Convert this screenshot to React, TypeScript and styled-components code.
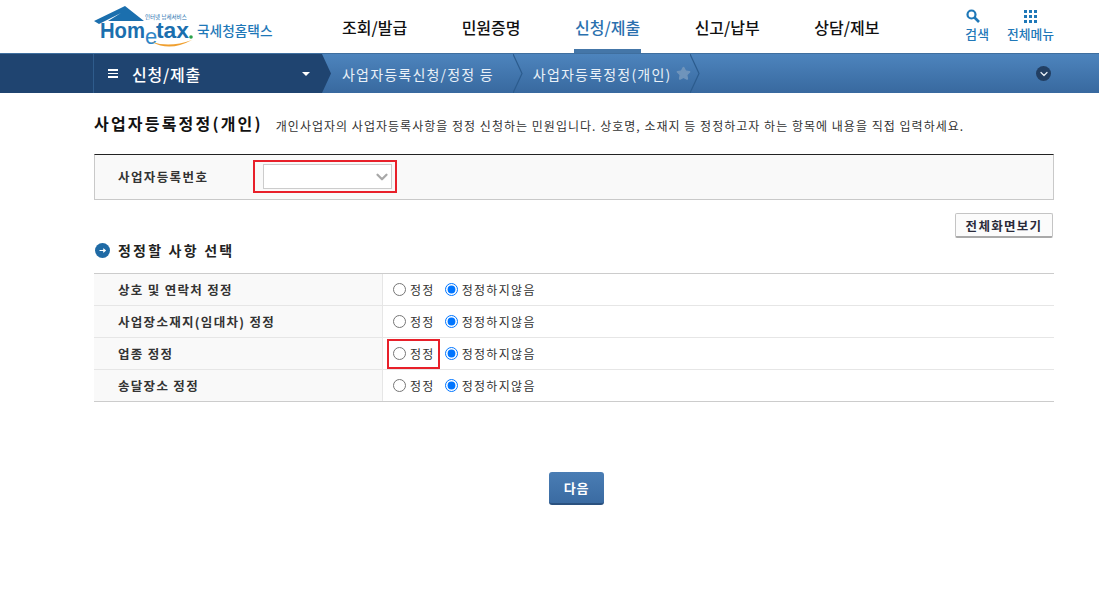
import React from 'react';
import styled, { createGlobalStyle } from 'styled-components';
import { ChevronDown, Star } from 'lucide-react';

const GlobalStyle = createGlobalStyle`
  html, body {
    margin: 0;
    padding: 0;
    background: #fff;
  }
  body {
    font-family: "Noto Sans CJK KR", "Liberation Sans", sans-serif;
    color: #222;
  }
  * {
    box-sizing: border-box;
  }
`;

const Page = styled.div`
  width: 1099px;
  height: 606px;
  overflow: hidden;
`;

const Header = styled.header`
  height: 53px;
  padding: 0 45px 0 94px;
  display: flex;
  align-items: stretch;
`;

const LogoBox = styled.div`
  width: 248px;
  flex: none;
`;

const LogoSvg = styled.svg`
  display: block;
  margin-top: 4px;
`;

const MainNav = styled.nav`
  display: flex;
  gap: 54.5px;
  flex: none;
`;

const MainNavItem = styled.a<{ $active?: boolean }>`
  display: block;
  padding-top: 16px;
  font-size: 16px;
  line-height: 22px;
  font-weight: 500;
  white-space: nowrap;
  color: ${(p) => (p.$active ? '#2a70ae' : '#111')};
`;

const ActiveLabel = styled.span`
  display: block;
  height: 37px;
  margin: 0 -1px;
  padding: 0 1px;
  border-bottom: 4px solid #4476a8;
`;

const Tools = styled.div`
  display: flex;
  margin-left: auto;
  gap: 18px;
`;

const ToolItem = styled.a`
  display: flex;
  flex-direction: column;
  align-items: center;
  padding-top: 9px;
  gap: 3px;
  font-size: 12.8px;
  line-height: 16px;
  color: #1f78b8;
  font-weight: 500;
`;

const ToolIcon = styled.span<{ $start?: boolean }>`
  height: 14px;
  display: flex;
  align-items: center;
  align-self: ${(p) => (p.$start ? 'flex-start' : 'center')};
  margin-left: ${(p) => (p.$start ? '1px' : '0')};
`;

const SubBar = styled.div`
  height: 40px;
  display: flex;
  align-items: center;
  background: linear-gradient(#4d84bd, #38699f);
  border-top: 1px solid #3f6f9f;
  color: #fff;
`;

const SectionPad = styled.div`
  width: 94px;
  height: 100%;
  flex: none;
  background: #1f4470;
  border-right: 1px solid #2f5c8c;
`;

const Section = styled.div`
  width: 228px;
  height: 100%;
  flex: none;
  display: flex;
  align-items: center;
  padding-left: 14px;
  padding-right: 12px;
  background: #1f4470;
`;

const Hamburger = styled.span`
  width: 10px;
  height: 9px;
  margin-right: 14px;
  border-top: 2px solid #fff;
  border-bottom: 2px solid #fff;
  display: flex;
  align-items: center;
  &::before {
    content: '';
    width: 100%;
    height: 1.5px;
    background: #fff;
  }
`;

const SectionTitle = styled.span`
  font-size: 16px;
  line-height: 20px;
  font-weight: 500;
  letter-spacing: 0.8px;
  flex: 1;
`;

const Caret = styled.span`
  width: 0;
  height: 0;
  border-left: 4px solid transparent;
  border-right: 4px solid transparent;
  border-top: 4px solid #fff;
`;

const CrumbArrow = styled.svg`
  flex: none;
  display: block;
  height: 39px;
`;

const Crumb = styled.span<{ $current?: boolean }>`
  margin: 0 ${(p) => (p.$current ? '5px' : '19px')} 0 9px;
  font-size: 14px;
  line-height: 20px;
  letter-spacing: 1.2px;
  color: #eaf1f8;
  white-space: nowrap;
`;

const CrumbStar = styled(Star)`
  flex: none;
  margin-right: -1px;
`;

const CollapseButton = styled.span`
  width: 15px;
  height: 15px;
  border-radius: 50%;
  background: #223f63;
  margin-left: auto;
  margin-right: 48px;
  display: flex;
  align-items: center;
  justify-content: center;
  color: #e6edf5;
`;

const Main = styled.main`
  width: 960px;
  margin-left: 94px;
  padding-top: 18px;
`;

const TitleRow = styled.div`
  display: flex;
  align-items: center;
  height: 24px;
`;

const Title = styled.h1`
  margin: 0 13px 0 0;
  font-size: 16px;
  line-height: 24px;
  font-weight: 700;
  letter-spacing: 2.2px;
  color: #111;
  white-space: nowrap;
`;

const TitleNote = styled.p`
  margin: 0;
  padding-top: 5px;
  font-size: 12px;
  line-height: 18px;
  letter-spacing: 1.02px;
  color: #333;
  white-space: nowrap;
`;

const LookupBox = styled.div`
  margin-top: 19px;
  height: 46px;
  display: flex;
  align-items: center;
  padding: 0 0 1px 23px;
  background: #f9f9f9;
  border: 1px solid #c9c9c9;
  border-top-color: #222;
`;

const LookupLabel = styled.span`
  width: 135px;
  font-size: 12.5px;
  font-weight: 700;
  letter-spacing: 1.4px;
  color: #333;
`;

const RedFrame = styled.div`
  width: 144px;
  height: 33px;
  padding: 2px 3px 2px 8px;
  border: 2px solid #e8202a;
`;

const SelectBox = styled.div`
  height: 100%;
  display: flex;
  align-items: center;
  justify-content: flex-end;
  background: #fff;
  border: 1px solid #ccc;
  color: #a8a8a8;
`;

const ActionRow = styled.div`
  display: flex;
  justify-content: flex-end;
  padding: 13px 1px 0 0;
`;

const GhostButton = styled.button`
  width: 98px;
  height: 25px;
  padding: 0;
  font-family: inherit;
  font-size: 12.5px;
  font-weight: 700;
  letter-spacing: 1.3px;
  color: #2a2a3a;
  background: #fbfbfb;
  border: 1px solid #c4c4c4;
  border-bottom: 2px solid #a9a9a9;
  border-radius: 2px;
`;

const SectionHead = styled.div`
  display: flex;
  align-items: center;
  gap: 8px;
  height: 20px;
  margin-top: 2px;
  padding-left: 1px;
`;

const HeadTitle = styled.h2`
  margin: 0;
  font-size: 14px;
  line-height: 20px;
  font-weight: 700;
  color: #222;
  letter-spacing: 2.2px;
`;

const Table = styled.div`
  margin-top: 13px;
  border-top: 1px solid #ccc;
`;

const Row = styled.div`
  display: flex;
  height: 32px;
  border-bottom: 1px solid #e6e6e6;
  &:last-child {
    border-bottom-color: #ccc;
  }
`;

const RowLabel = styled.div`
  width: 289px;
  flex: none;
  display: flex;
  align-items: center;
  padding-left: 24px;
  background: #f9f9f9;
  border-right: 1px solid #e6e6e6;
  font-size: 12.5px;
  font-weight: 700;
  letter-spacing: 1.3px;
  color: #333;
`;

const RowBody = styled.div`
  display: flex;
  align-items: center;
  padding-left: 4px;
`;

const RadioOption = styled.label<{ $marked?: boolean }>`
  display: flex;
  align-items: center;
  gap: 4px;
  height: 30px;
  padding: 0 5px;
  font-size: 12px;
  letter-spacing: 1.3px;
  color: #333;
  outline: ${(p) => (p.$marked ? '2px solid #e8202a' : 'none')};
  outline-offset: -2px;
  &:first-child {
    padding-left: 6px;
  }
`;

const Radio = styled.input`
  width: 13px;
  height: 13px;
  margin: 0;
  accent-color: #0075ff;
`;

const Footer = styled.div`
  display: flex;
  justify-content: center;
  padding: 70px 0 0 5px;
`;

const PrimaryButton = styled.button`
  width: 55px;
  height: 33px;
  padding: 0;
  font-family: inherit;
  font-size: 13px;
  font-weight: 700;
  letter-spacing: 0.8px;
  color: #fff;
  background: linear-gradient(#4a7db4, #3a6ba2);
  border: 0;
  border-bottom: 2px solid #2a517f;
  border-radius: 3px;
`;

const Logo = () => (
  <LogoSvg width="182" height="48" viewBox="0 0 182 48">
    <path d="M0 17 L31 2 L50 17 L14 17 L27 9 L5 20 Z" fill="#1b6fae" />
    <text x="51" y="15" fontSize="5.5" fill="#1b6fae" fontFamily="'Noto Sans CJK KR', sans-serif">
      인터넷 납세서비스
    </text>
    <text x="6" y="34" fontSize="22" fontWeight="700" fill="#1b6fae" fontFamily="'Liberation Sans', sans-serif" textLength="45" lengthAdjust="spacingAndGlyphs">
      Hom
    </text>
    <text x="51" y="40" fontSize="22" fill="#2f86c6" fontFamily="'Liberation Sans', sans-serif">
      e
    </text>
    <text x="62" y="34" fontSize="22" fontWeight="700" fill="#1b6fae" fontFamily="'Liberation Sans', sans-serif" textLength="33" lengthAdjust="spacingAndGlyphs">
      tax
    </text>
    <circle cx="97" cy="33" r="1.8" fill="#2aa24a" />
    <path d="M58 38 Q76 48 98 36 Q76 44 58 38 Z" fill="#f0a030" />
    <text x="103" y="31.5" fontSize="13.7" fontWeight="500" fill="#1f78b8" fontFamily="'Noto Sans CJK KR', sans-serif">
      국세청홈택스
    </text>
  </LogoSvg>
);

const SearchIcon = () => (
  <svg width="14" height="14" viewBox="0 0 14 14" fill="none" stroke="#1f78b8">
    <circle cx="5.5" cy="5.5" r="4" strokeWidth="2.2" />
    <path d="M8.5 8.5 L13 13" strokeWidth="2.6" />
  </svg>
);

const GridIcon = () => (
  <svg width="13" height="13" viewBox="0 0 13 13" fill="#1f78b8">
    {[0, 5, 10].map((y) =>
      [0, 5, 10].map((x) => <rect key={`${x}-${y}`} x={x} y={y} width="3" height="3" />),
    )}
  </svg>
);

const Arrow = ({ light }: { light?: boolean }) => (
  <CrumbArrow width="11" viewBox="0 0 11 39">
    {light ? (
      <path d="M0 0 L9 19.5 L0 39" fill="none" stroke="#2c5c8e" strokeWidth="1.2" />
    ) : (
      <path d="M0 0 L9 19.5 L0 39 Z" fill="#1f4470" />
    )}
  </CrumbArrow>
);

const BulletIcon = () => (
  <svg width="15" height="15" viewBox="0 0 15 15">
    <circle cx="7.5" cy="7.5" r="7.5" fill="#1f6aa5" />
    <path d="M4.5 7.5 H10 M8.2 5.8 L10.2 7.5 L8.2 9.2" fill="none" stroke="#fff" strokeWidth="1.2" />
  </svg>
);

const rows = [
  { label: '상호 및 연락처 정정' },
  { label: '사업장소재지(임대차) 정정' },
  { label: '업종 정정', marked: true },
  { label: '송달장소 정정' },
];

const App = () => (
  <Page>
    <GlobalStyle />
    <Header>
      <LogoBox>
        <Logo />
      </LogoBox>
      <MainNav>
        <MainNavItem>조회/발급</MainNavItem>
        <MainNavItem>민원증명</MainNavItem>
        <MainNavItem $active>
          <ActiveLabel>신청/제출</ActiveLabel>
        </MainNavItem>
        <MainNavItem>신고/납부</MainNavItem>
        <MainNavItem>상담/제보</MainNavItem>
      </MainNav>
      <Tools>
        <ToolItem>
          <ToolIcon $start>
            <SearchIcon />
          </ToolIcon>
          검색
        </ToolItem>
        <ToolItem>
          <ToolIcon>
            <GridIcon />
          </ToolIcon>
          전체메뉴
        </ToolItem>
      </Tools>
    </Header>
    <SubBar>
      <SectionPad />
      <Section>
        <Hamburger />
        <SectionTitle>신청/제출</SectionTitle>
        <Caret />
      </Section>
      <Arrow />
      <Crumb>사업자등록신청/정정 등</Crumb>
      <Arrow light />
      <Crumb $current>사업자등록정정(개인)</Crumb>
      <CrumbStar size={15} fill="#6f94bb" color="#6f94bb" />
      <Arrow light />
      <CollapseButton>
        <ChevronDown size={12} strokeWidth={2.5} />
      </CollapseButton>
    </SubBar>
    <Main>
      <TitleRow>
        <Title>사업자등록정정(개인)</Title>
        <TitleNote>
          개인사업자의 사업자등록사항을 정정 신청하는 민원입니다. 상호명, 소재지 등 정정하고자 하는 항목에 내용을 직접 입력하세요.
        </TitleNote>
      </TitleRow>
      <LookupBox>
        <LookupLabel>사업자등록번호</LookupLabel>
        <RedFrame>
          <SelectBox>
            <ChevronDown size={18} strokeWidth={3} />
          </SelectBox>
        </RedFrame>
      </LookupBox>
      <ActionRow>
        <GhostButton>전체화면보기</GhostButton>
      </ActionRow>
      <SectionHead>
        <BulletIcon />
        <HeadTitle>정정할 사항 선택</HeadTitle>
      </SectionHead>
      <Table>
        {rows.map((row) => (
          <Row key={row.label}>
            <RowLabel>{row.label}</RowLabel>
            <RowBody>
              <RadioOption $marked={row.marked}>
                <Radio type="radio" name={row.label} />
                정정
              </RadioOption>
              <RadioOption>
                <Radio type="radio" name={row.label} defaultChecked />
                정정하지않음
              </RadioOption>
            </RowBody>
          </Row>
        ))}
      </Table>
      <Footer>
        <PrimaryButton>다음</PrimaryButton>
      </Footer>
    </Main>
  </Page>
);

export default App;
